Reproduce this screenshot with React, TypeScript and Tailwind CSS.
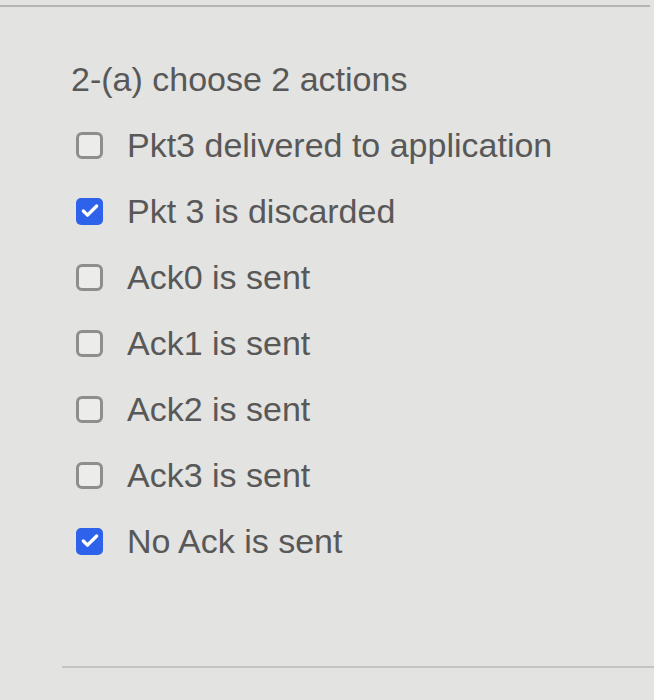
import { Check } from "lucide-react"

const options = [
  { label: "Pkt3 delivered to application", checked: false },
  { label: "Pkt 3 is discarded", checked: true },
  { label: "Ack0 is sent", checked: false },
  { label: "Ack1 is sent", checked: false },
  { label: "Ack2 is sent", checked: false },
  { label: "Ack3 is sent", checked: false },
  { label: "No Ack is sent", checked: true },
]

function Box({ checked }: { checked: boolean }) {
  if (checked) {
    return (
      <span className="w-[27px] h-[27px] rounded-[5px] bg-[#2f62ea] flex items-center justify-center shrink-0">
        <Check className="w-[20px] h-[20px] text-white" strokeWidth={4} />
      </span>
    )
  }
  return <span className="w-[27px] h-[27px] rounded-[6px] border-[3px] border-[#8e8e8e] bg-[#ececea] shrink-0" />
}

export default function App() {
  return (
    <div className="w-[654px] h-[700px] bg-[#e3e3e1] overflow-hidden font-['Liberation_Sans',Arial,sans-serif] text-[#585858]">
      <div className="pt-[5px]">
        <div className="h-[2px] bg-[#b4b4b2] mr-[4px]" />
      </div>
      <div className="pl-[71px] pt-[53px]">
        <div className="text-[34px] leading-[38px]">2-(a) choose 2 actions</div>
        <div className="mt-[28px] flex flex-col gap-[28px] pl-[5px]">
          {options.map((o) => (
            <div key={o.label} className="flex items-center gap-[24px] h-[38px]">
              <Box checked={o.checked} />
              <span className="text-[34px] leading-[38px]">{o.label}</span>
            </div>
          ))}
        </div>
      </div>
      <div className="mt-[106px] ml-[62px] h-[2px] bg-[#c4c4c2]" />
    </div>
  )
}
